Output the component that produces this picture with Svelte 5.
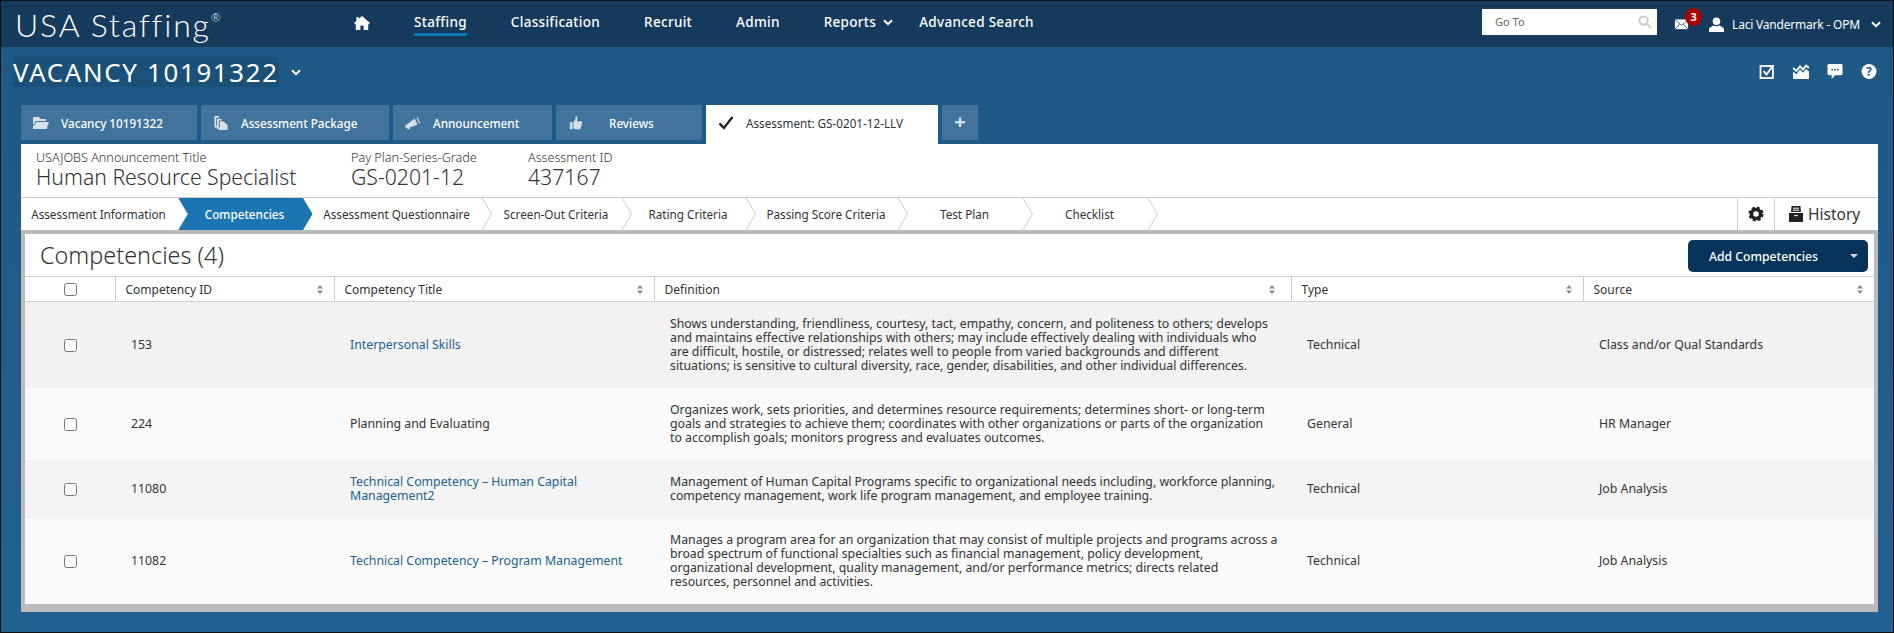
<script>
    const navItems = ['Staffing', 'Classification', 'Recruit', 'Admin']

    const steps = [
        'Assessment Information',
        'Competencies',
        'Assessment Questionnaire',
        'Screen-Out Criteria',
        'Rating Criteria',
        'Passing Score Criteria',
        'Test Plan',
        'Checklist'
    ]

    const columns = ['Competency ID', 'Competency Title', 'Definition', 'Type', 'Source']

    const rows = [
        {
            id: '153',
            title: ['Interpersonal Skills'],
            link: true,
            definition: [
                'Shows understanding, friendliness, courtesy, tact, empathy, concern, and politeness to others; develops',
                'and maintains effective relationships with others; may include effectively dealing with individuals who',
                'are difficult, hostile, or distressed; relates well to people from varied backgrounds and different',
                'situations; is sensitive to cultural diversity, race, gender, disabilities, and other individual differences.'
            ],
            type: 'Technical',
            source: 'Class and/or Qual Standards'
        },
        {
            id: '224',
            title: ['Planning and Evaluating'],
            link: false,
            definition: [
                'Organizes work, sets priorities, and determines resource requirements; determines short- or long-term',
                'goals and strategies to achieve them; coordinates with other organizations or parts of the organization',
                'to accomplish goals; monitors progress and evaluates outcomes.'
            ],
            type: 'General',
            source: 'HR Manager'
        },
        {
            id: '11080',
            title: ['Technical Competency – Human Capital', 'Management2'],
            link: true,
            definition: [
                'Management of Human Capital Programs specific to organizational needs including, workforce planning,',
                'competency management, work life program management, and employee training.'
            ],
            type: 'Technical',
            source: 'Job Analysis'
        },
        {
            id: '11082',
            title: ['Technical Competency – Program Management'],
            link: true,
            definition: [
                'Manages a program area for an organization that may consist of multiple projects and programs across a',
                'broad spectrum of functional specialties such as financial management, policy development,',
                'organizational development, quality management, and/or performance metrics; directs related',
                'resources, personnel and activities.'
            ],
            type: 'Technical',
            source: 'Job Analysis'
        }
    ]
</script>

<div class="page">
    <header class="topbar">
        <div class="logo">USA Staffing<sup>®</sup></div>
        <nav class="nav">
            <svg class="home" viewBox="0 0 16 14"><path d="M8 0 L16 7 L14.4 8.4 L14.2 8.2 V14 H9.6 V9.5 H6.4 V14 H1.8 V8.2 L1.6 8.4 L0 7 L2.4 4.9 V1 H4.6 V3 Z"/></svg>
            {#each navItems as item, i}
                <span class="nav-item" class:current={i === 0}>{item}</span>
            {/each}
            <span class="nav-item reports">Reports
                <svg class="chev" viewBox="0 0 10 7"><path d="M1 1.2 L5 5.2 L9 1.2"/></svg>
            </span>
            <span class="nav-item advanced">Advanced Search</span>
        </nav>
        <div class="top-right">
            <div class="goto">
                <span>Go To</span>
                <svg viewBox="0 0 14 14"><circle cx="5.6" cy="5.6" r="4.2"/><path d="M8.8 8.8 L13 13"/></svg>
            </div>
            <div class="mail">
                <svg viewBox="0 0 16 12"><rect x="0.5" y="0.5" width="15" height="11"/><path d="M0.5 0.5 L8 7 L15.5 0.5 M0.5 11.5 L6 5.5 M15.5 11.5 L10 5.5"/></svg>
                <span class="badge">3</span>
            </div>
            <svg class="user" viewBox="0 0 15 15"><circle cx="7.5" cy="4.2" r="3.8"/><path d="M0 15 V12.6 C0 10.4 3 9.6 4.6 8.6 C6.4 9.6 8.6 9.6 10.4 8.6 C12 9.6 15 10.4 15 12.6 V15 Z"/></svg>
            <span class="user-name">Laci Vandermark - OPM</span>
            <svg class="chev" viewBox="0 0 10 7"><path d="M1 1.2 L5 5.2 L9 1.2"/></svg>
        </div>
    </header>

    <div class="title-row">
        <div class="vacancy">
            <h1>VACANCY 10191322</h1>
            <svg class="chev" viewBox="0 0 10 7"><path d="M1 1.2 L5 5.2 L9 1.2"/></svg>
        </div>
        <div class="tools">
            <svg viewBox="0 0 15 15"><rect x="1" y="2" width="12.4" height="12" class="line"/><path d="M4 7 L7 10.5 L13.5 1.5" class="line"/></svg>
            <svg viewBox="0 0 16 15"><path d="M0 15 V7.4 L3.5 10.2 L7 5.6 L10 8.8 L13 5 L16 7.4 V15 Z" class="solid"/><path d="M0 4 L3.5 7 L7 2.2 L10 5.6 L13 1.6 L16 4" class="line"/></svg>
            <svg viewBox="0 0 16 16"><path d="M1.5 0 H14.5 A1.5 1.5 0 0 1 16 1.5 V10.5 A1.5 1.5 0 0 1 14.5 12 H8 L4.5 16 V12 H1.5 A1.5 1.5 0 0 1 0 10.5 V1.5 A1.5 1.5 0 0 1 1.5 0 Z" class="solid"/><circle cx="5" cy="6" r="1" fill="#1f5a87"/><circle cx="8" cy="6" r="1" fill="#1f5a87"/><circle cx="11" cy="6" r="1" fill="#1f5a87"/></svg>
            <svg viewBox="0 0 16 16"><circle cx="8" cy="8" r="8" class="solid"/><text x="8" y="12.4" text-anchor="middle" class="qmark">?</text></svg>
        </div>
    </div>

    <div class="tabs">
        <div class="tab">
            <svg viewBox="0 0 16 14"><path d="M0 1 H6 L7.5 3 H13 V5 H3 L0 9 Z M3.6 6 H16 L13.6 13 H0 V10.6 Z"/></svg>
            <span>Vacancy 10191322</span>
        </div>
        <div class="tab">
            <svg viewBox="0 0 15 16"><path d="M0 0 H5 V2 H2 V11 H3 V13 H0 Z M3 3 H8 V5 H5 V13 H6 V15 H3 Z M6 6 H10 L15 10 V16 H6 Z"/></svg>
            <span>Assessment Package</span>
        </div>
        <div class="tab">
            <svg viewBox="0 0 18 14"><path d="M0 10 L11 2 L14 9 L5 12 L5.5 14 L3 14 L2.4 12.6 L1 13 Z M13 1 L16 8 L17 7.4 L14.4 0.4 Z"/></svg>
            <span>Announcement</span>
        </div>
        <div class="tab reviews">
            <svg viewBox="0 0 14 16"><path d="M0 7 H3 V15 H0 Z M4 7 L6.5 3 V0.5 C8 0 9 1 8.6 3 L8 6 H13 C14.4 6 14.4 8 13.4 8.2 C14.4 8.6 14.2 10.2 13 10.4 C13.8 11 13.6 12.4 12.4 12.6 C13 13.4 12.6 15 11.4 15 H6 L4 14 Z"/></svg>
            <span>Reviews</span>
        </div>
        <div class="tab active">
            <svg viewBox="0 0 15 14"><path d="M1 7.4 L5.4 12 L14 1"/></svg>
            <span>Assessment: GS-0201-12-LLV</span>
        </div>
        <div class="tab add">+</div>
    </div>

    <main class="content">
        <div class="info">
            <div class="info-item first">
                <span class="label">USAJOBS Announcement Title</span>
                <span class="value">Human Resource Specialist</span>
            </div>
            <div class="info-item second">
                <span class="label">Pay Plan-Series-Grade</span>
                <span class="value">GS-0201-12</span>
            </div>
            <div class="info-item">
                <span class="label">Assessment ID</span>
                <span class="value">437167</span>
            </div>
        </div>

        <div class="steps-bar">
            <div class="steps">
                {#each steps as step, i}
                    <div class="step" class:on={i === 1}>
                        <span>{step}</span>
                        <svg class="arrow" viewBox="0 0 10 32" preserveAspectRatio="none"><path d="M0 0 L9.5 16 L0 32"/></svg>
                    </div>
                {/each}
            </div>
            <div class="step-tools">
                <button class="gear" aria-label="Settings">
                    <svg viewBox="0 0 16 16"><circle cx="8" cy="8" r="4.5" class="ring"/><circle cx="8" cy="8" r="6.4" class="teeth"/></svg>
                </button>
                <button class="history">
                    <svg viewBox="0 0 14 16"><path d="M2.6 0 H11.4 L12 6 H2 Z M0 7 H14 V16 H0 Z"/><path d="M4 2.2 H10 M3.8 4.2 H10.2 M5 9.6 H9" class="slot"/></svg>
                    History
                </button>
            </div>
        </div>

        <section class="panel">
            <div class="panel-head">
                <h2>Competencies (4)</h2>
                <button class="add-btn">
                    <span>Add Competencies</span>
                    <i class="caret"></i>
                </button>
            </div>
            <table>
                <colgroup>
                    <col class="c0" /><col class="c1" /><col class="c2" /><col class="c3" /><col class="c4" /><col class="c5" />
                </colgroup>
                <thead>
                    <tr>
                        <th class="check"><input type="checkbox" /></th>
                        {#each columns as col}
                            <th>
                                <div class="th-in">
                                    <span>{col}</span>
                                    <svg class="sort" viewBox="0 0 6 9"><path d="M3 0 L6 3.4 H0 Z M0 5.6 H6 L3 9 Z"/></svg>
                                </div>
                            </th>
                        {/each}
                    </tr>
                </thead>
                <tbody>
                    {#each rows as row}
                        <tr>
                            <td class="check"><input type="checkbox" /></td>
                            <td>{row.id}</td>
                            <td class:link={row.link}>
                                {#each row.title as line}
                                    <span class="ln">{line}</span>
                                {/each}
                            </td>
                            <td>
                                {#each row.definition as line}
                                    <span class="ln">{line}</span>
                                {/each}
                            </td>
                            <td>{row.type}</td>
                            <td>{row.source}</td>
                        </tr>
                    {/each}
                </tbody>
            </table>
        </section>
    </main>
</div>

<style>
    :global(body) {
        margin: 0;
    }
    .page {
        width: 1894px;
        height: 633px;
        box-sizing: border-box;
        border: 1px solid #111;
        overflow: hidden;
        font-family: "Noto Sans", sans-serif;
        color: #333;
        background: linear-gradient(#1e5885, #236190);
    }
    svg {
        display: block;
        flex: none;
    }
    .chev {
        width: 10px;
        height: 7px;
        fill: none;
        stroke: #fff;
        stroke-width: 2;
    }

    .topbar {
        height: 46px;
        display: flex;
        align-items: center;
        background: #163a5c;
        color: #fff;
        padding-left: 14px;
    }
    .logo {
        width: 339px;
        font-family: "Lato", sans-serif;
        font-weight: 300;
        font-size: 32px;
        letter-spacing: 1.8px;
        white-space: nowrap;
    }
    .logo sup {
        font-size: 12px;
        letter-spacing: 0;
        vertical-align: 15px;
        line-height: 0;
    }
    .nav {
        display: flex;
        align-items: center;
        gap: 44px;
        font-size: 13.5px;
        font-weight: 500;
    }
    .home {
        width: 16px;
        height: 14px;
        fill: #fff;
        margin-top: -3px;
    }
    .nav-item {
        position: relative;
        top: -2px;
        letter-spacing: 0.3px;
        white-space: nowrap;
    }
    .nav-item.current::after {
        content: "";
        position: absolute;
        left: 0;
        right: 0;
        top: 20px;
        height: 3px;
        background: #0f77b3;
    }
    .reports {
        display: flex;
        align-items: center;
        gap: 7px;
    }
    .advanced {
        margin-left: -18px;
    }
    .top-right {
        margin-left: auto;
        display: flex;
        align-items: center;
        padding-right: 12px;
    }
    .goto {
        width: 175px;
        height: 26px;
        box-sizing: border-box;
        margin-top: -5px;
        padding: 0 5px 0 13px;
        display: flex;
        align-items: center;
        justify-content: space-between;
        background: #fff;
        color: #666;
        font-size: 11px;
    }
    .goto svg {
        width: 14px;
        height: 14px;
        fill: none;
        stroke: #ccc;
        stroke-width: 2;
    }
    .mail {
        position: relative;
        margin-left: 17px;
    }
    .mail svg {
        width: 15px;
        height: 11px;
        fill: #fff;
        stroke: #163a5c;
        stroke-width: 0.8;
    }
    .badge {
        position: absolute;
        left: 11px;
        top: -11px;
        width: 17px;
        height: 18px;
        border-radius: 50%;
        background: #b00000;
        color: #fff;
        font-size: 11px;
        font-weight: 700;
        line-height: 17px;
        text-align: center;
    }
    .user {
        width: 15px;
        height: 15px;
        fill: #fff;
        margin-left: 20px;
    }
    .user-name {
        margin-left: 8px;
        margin-right: 11px;
        font-size: 12px;
        letter-spacing: -0.2px;
        white-space: nowrap;
    }

    .title-row {
        height: 58px;
        box-sizing: border-box;
        display: flex;
        align-items: flex-start;
        justify-content: space-between;
        padding: 10px 16px 0 12px;
    }
    .vacancy {
        display: flex;
        align-items: center;
        gap: 12px;
    }
    h1 {
        margin: 0;
        height: 30px;
        line-height: 30px;
        background: #1b5078;
        color: #fff;
        font-size: 25.8px;
        font-weight: 400;
        letter-spacing: 1.7px;
        white-space: nowrap;
    }
    .tools {
        display: flex;
        gap: 18px;
        margin-top: 7px;
    }
    .tools svg {
        width: 16px;
        height: 15px;
    }
    .line {
        fill: none;
        stroke: #fff;
        stroke-width: 1.8;
    }
    .solid {
        fill: #fff;
    }
    .qmark {
        fill: #1f5a87;
        font-size: 13px;
        font-weight: 700;
    }

    .tabs {
        display: grid;
        grid-template-columns: 176px 188px 159px 146px 232px 36px;
        gap: 4px;
        height: 39px;
        margin-left: 20px;
    }
    .tab {
        height: 35px;
        box-sizing: border-box;
        display: flex;
        align-items: center;
        gap: 12px;
        padding-left: 12px;
        background: #41739c;
        color: #fff;
        font-size: 11.7px;
        font-weight: 500;
        white-space: nowrap;
    }
    .tab svg {
        width: 16px;
        height: 14px;
        fill: #d6e0e9;
    }
    .tab.reviews {
        gap: 25px;
    }
    .tab.active {
        height: 39px;
        background: #fff;
        color: #333;
        font-weight: 400;
        padding-bottom: 3px;
    }
    .tab.active svg {
        fill: none;
        stroke: #222;
        stroke-width: 2.4;
    }
    .tab.add {
        padding: 0 0 2px;
        justify-content: center;
        color: #d6e0e9;
        font-size: 20px;
        font-weight: 700;
    }

    .content {
        margin: 0 15px 0 20px;
        background: #fff;
    }
    .info {
        height: 53px;
        display: flex;
        padding-left: 15px;
        box-sizing: border-box;
    }
    .info-item {
        display: flex;
        flex-direction: column;
        padding-top: 6px;
        width: 177px;
    }
    .info-item.first {
        width: 315px;
    }
    .label {
        font-size: 12.6px;
        font-weight: 300;
        line-height: 15px;
    }
    .value {
        font-size: 21.2px;
        font-weight: 300;
        line-height: 23px;
        white-space: nowrap;
    }

    .steps-bar {
        height: 33px;
        box-sizing: border-box;
        border-top: 1px solid #ccc;
        display: flex;
        justify-content: space-between;
    }
    .steps {
        display: grid;
        grid-template-columns: 157px 125px 179px 140px 124px 152px 125px 125px;
    }
    .step {
        position: relative;
        display: flex;
        align-items: center;
        justify-content: center;
        padding-left: 8px;
        font-size: 11.7px;
        white-space: nowrap;
    }
    .step:first-child {
        padding: 0 2px 0 0;
    }
    .arrow {
        position: absolute;
        left: 100%;
        top: 0;
        width: 10px;
        height: 32px;
        fill: #fff;
        stroke: #ccc;
        stroke-width: 1;
        z-index: 1;
    }
    .step.on {
        background: #1b75b0;
        color: #fff;
        font-weight: 500;
    }
    .step.on .arrow {
        fill: #1b75b0;
        stroke: none;
        z-index: 2;
    }
    .step.on::before {
        content: "";
        position: absolute;
        left: 0;
        top: 0;
        border-left: 9px solid #fff;
        border-top: 16px solid transparent;
        border-bottom: 16px solid transparent;
    }
    .step-tools {
        display: flex;
    }
    .step-tools button {
        display: flex;
        align-items: center;
        border: 0;
        border-left: 1px solid #ccc;
        background: none;
        padding: 0;
        font-family: inherit;
        color: #333;
    }
    .gear {
        width: 37px;
        justify-content: center;
    }
    .gear svg {
        width: 16px;
        height: 16px;
        fill: none;
    }
    .ring {
        stroke: #222;
        stroke-width: 3.4;
    }
    .teeth {
        stroke: #222;
        stroke-width: 2.2;
        stroke-dasharray: 3 2.03;
    }
    .history {
        width: 104px;
        gap: 5px;
        padding-left: 14px !important;
        font-size: 15.5px;
        font-weight: 400;
    }
    .history svg {
        width: 14px;
        height: 16px;
        fill: #222;
    }
    .slot {
        stroke: #fff;
        stroke-width: 1;
    }

    .panel {
        border: 4px solid #bbb;
        border-bottom-width: 8px;
        background: #fff;
    }
    .panel-head {
        height: 42px;
        box-sizing: border-box;
        padding: 6px 6px 0 15px;
        display: flex;
        justify-content: space-between;
        align-items: flex-start;
    }
    h2 {
        margin: 0;
        font-size: 23.4px;
        font-weight: 300;
        line-height: 30px;
    }
    .add-btn {
        width: 180px;
        height: 32px;
        display: flex;
        align-items: center;
        justify-content: space-between;
        border: 0;
        border-radius: 5px;
        padding: 0 10px 0 21px;
        background: #063359;
        color: #fff;
        font-family: inherit;
        font-size: 12.2px;
        font-weight: 500;
    }
    .caret {
        border-left: 4px solid transparent;
        border-right: 4px solid transparent;
        border-top: 4px solid #ddd;
    }

    table {
        width: 1849px;
        table-layout: fixed;
        border-collapse: collapse;
    }
    .c0 { width: 90px; }
    .c1 { width: 219px; }
    .c2 { width: 320px; }
    .c3 { width: 637px; }
    .c4 { width: 292px; }
    .c5 { width: 291px; }
    th {
        height: 25px;
        box-sizing: border-box;
        padding: 0 11px 0 10px;
        border-top: 1px solid #ccc;
        border-bottom: 1px solid #ccc;
        border-left: 1px solid #ccc;
        font-size: 12px;
        font-weight: 400;
        text-align: left;
    }
    th:nth-child(4) {
        padding-right: 16px;
    }
    th:first-child {
        border-left: 0;
    }
    th.check {
        padding: 0;
    }
    .th-in {
        display: flex;
        align-items: center;
        justify-content: space-between;
    }
    .sort {
        width: 6px;
        height: 9px;
        fill: #888;
    }
    td {
        padding: 15px 16px;
        font-size: 12.3px;
        line-height: 14px;
        vertical-align: middle;
    }
    td.check {
        padding: 0;
    }
    .check input {
        display: block;
        width: 13px;
        height: 13px;
        margin: 0 0 0 39px;
    }
    tbody tr:nth-child(1) { background: #f2f2f2; }
    tbody tr:nth-child(2) { background: #fafafa; }
    tbody tr:nth-child(3) { background: #f4f4f4; }
    tbody tr:nth-child(4) { background: #fafafa; }
    .link {
        color: #225f91;
    }
    .ln {
        display: block;
        white-space: nowrap;
    }
</style>
